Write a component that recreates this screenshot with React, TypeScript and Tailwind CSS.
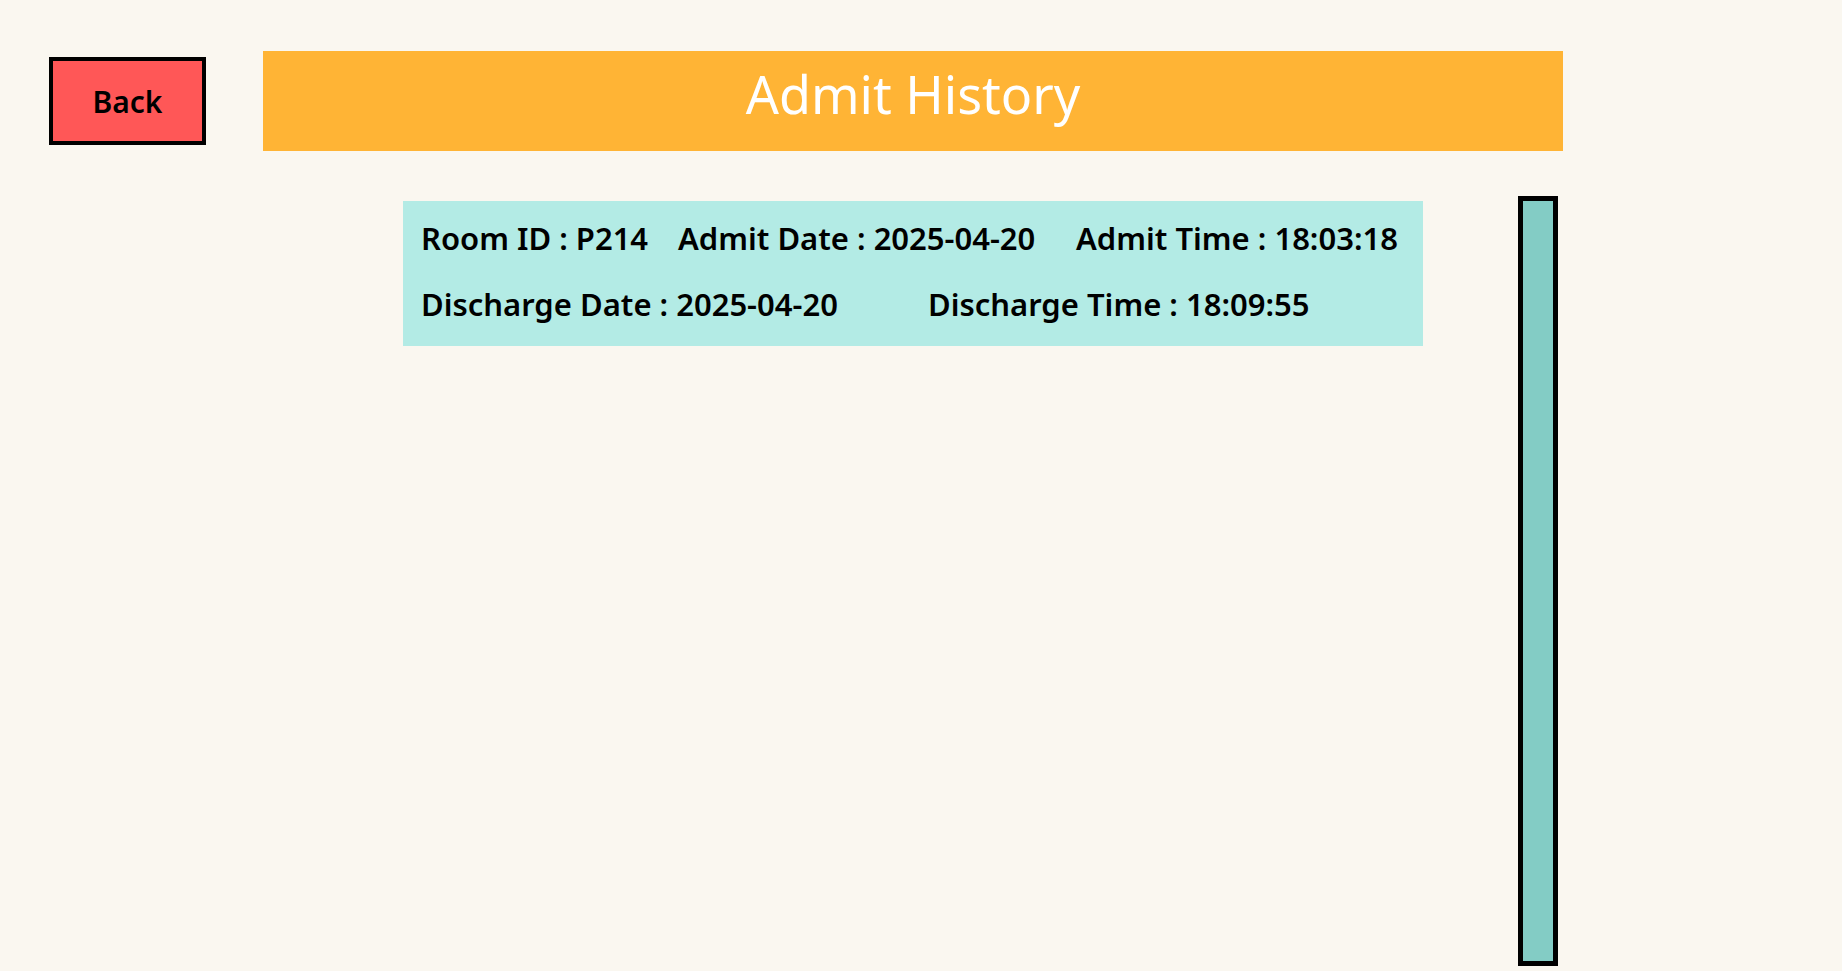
import React from "react";

export default function App() {
  const font = { fontFamily: '"Noto Sans", "Open Sans", sans-serif' };
  return (
    <div className="w-[1842px] h-[971px] bg-[#FAF7F0] overflow-hidden" style={font}>
      <div className="flex items-start pl-[49px] pt-[51px]">
        <button className="mt-[6px] w-[157px] h-[88px] bg-[#FF5757] border-[4px] border-black flex items-center justify-center text-[30px] font-semibold text-black leading-normal">
          Back
        </button>
        <div className="ml-[57px] w-[1300px] h-[100px] bg-[#FFB435] flex justify-center pt-[7px]">
          <span className="text-[52px] leading-[71px] text-white font-normal">Admit History</span>
        </div>
      </div>
      <div className="flex items-start mt-[45px]">
        <div className="ml-[403px] mt-[5px] w-[1020px] h-[145px] bg-[#B3EBE5] pl-[18px] pt-[15px] text-[31px] leading-[44px] font-semibold text-black whitespace-nowrap">
          <div className="flex">
            <span className="w-[257px]">Room ID : P214</span>
            <span className="w-[398px]">Admit Date : 2025-04-20</span>
            <span>Admit Time : 18:03:18</span>
          </div>
          <div className="flex mt-[22px]">
            <span className="w-[507px]">Discharge Date : 2025-04-20</span>
            <span>Discharge Time : 18:09:55</span>
          </div>
        </div>
        <div className="ml-[95px] w-[40px] h-[770px] bg-[#83CCC5] border-[5px] border-black"></div>
      </div>
    </div>
  );
}
